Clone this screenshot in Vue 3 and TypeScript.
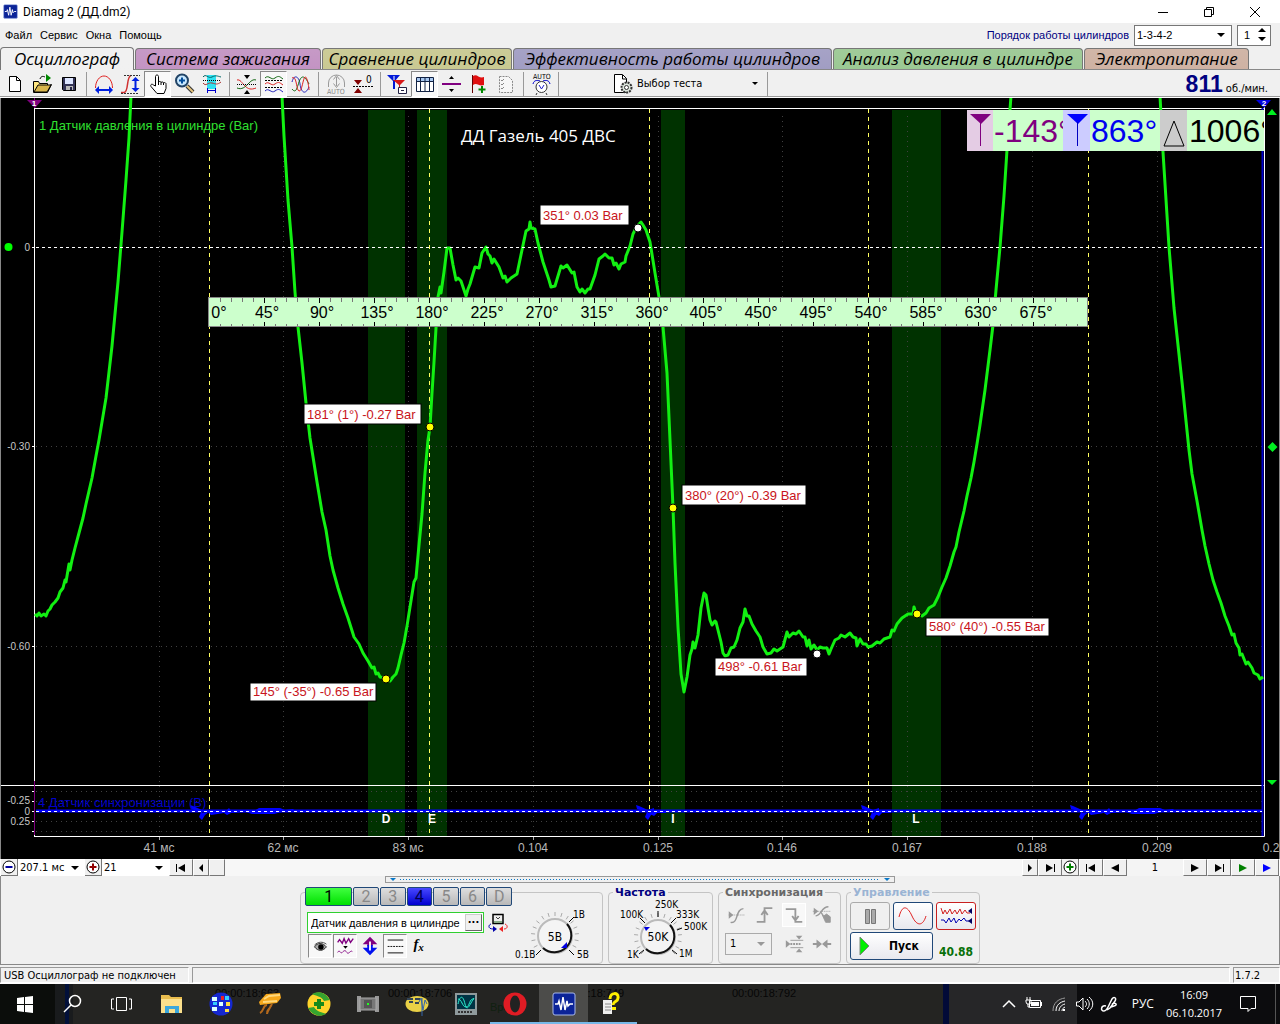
<script setup lang="ts">
import { ref } from 'vue'

interface Tool { label: string; icon: string; pressed?: boolean }
interface Tip { text: string; x: number; y: number; w: number; h: number; px: number; py: number; fill: string }

const order = ref('1-3-4-2')
const cylinder = ref('1')
const timeScale = ref('207.1 мс')
const zoomScale = ref('21')
const syncChannel = ref('1')
const channelName = ref('Датчик давления в цилиндре')

const menu = ['Файл', 'Сервис', 'Окна', 'Помощь']

const tabs = [
  { text: 'Осциллограф', color: '#f0f0f0', width: 134, active: true },
  { text: 'Система зажигания', color: '#c08ec0', width: 186 },
  { text: 'Сравнение цилиндров', color: '#c6c68c', width: 190 },
  { text: 'Эффективность работы цилиндров', color: '#9c98c0', width: 319 },
  { text: 'Анализ давления в цилиндре', color: '#96c68e', width: 250 },
  { text: 'Электропитание', color: '#ccae9e', width: 165 }
]

const toolGroups: Tool[][] = [
  [
    { label: 'Новый', icon: '<path d="M6.500 4.500h7l4 4v11h-11z" fill="#fff" stroke="#000"/><path d="M13.500 4.500v4h4" fill="none" stroke="#000"/>' },
    { label: 'Открыть', icon: '<path d="M3.500 9.500h5l1 2h8v3l4-2-4 8h-14z" fill="#ffe680" stroke="#000"/><path d="M4 20l4-7h13l-4 7z" fill="#d8b64c" stroke="#000"/><path d="M16 2v8l5-4z" fill="#080"/><path d="M10 7c1-3 3-3 5-2" fill="none" stroke="#000"/>' },
    { label: 'Сохранить', icon: '<path d="M5.500 5.500h13v13h-12l-1-1z" fill="#335" stroke="#000"/><path d="M8 6h8v6H8z" fill="#dde6ff"/><path d="M9 14h7v4H9z" fill="#bbb"/><path d="M13 15h2v3h-2z" fill="#224"/>' }
  ],
  [
    { label: 'Масштаб цикла', icon: '<path d="M3.500 16c0-7 4-12 8.500-12s8.500 5 8.500 12" fill="none" stroke="#e02020"/><path d="M3 18l4-4v3h10v-3l4 4-4 4v-3H7v3z" fill="#0020e0"/>' },
    { label: 'Амплитуда', icon: '<path d="M2 20.500h3c5 0 2-16 7-17" fill="none" stroke="#d03030" stroke-width="1.500"/><path d="M5 3.500h16M2 21.500h18" stroke="#333" stroke-dasharray="2 1"/><path d="M16.500 5l4 4h-3v7h3l-4 4-4-4h3V9h-3z" fill="#0020e0"/>' },
    { label: 'Рука', pressed: true, icon: '<path d="M9.500 14V4.500c0-2 3-2 3 0V10c1-1 2.500-.5 2.500.5 1-1 2.500-.5 2.500.5 1-1 3 0 2.500 1.500v4l-2 5h-7l-6-7c-1-2 1-3 2.500-1.500z" fill="#fff" stroke="#000"/><path d="M12.500 10v3M15 10.500V13M17.500 11v2" stroke="#000"/>' },
    { label: 'Лупа', icon: '<path d="M14 14l6 6" stroke="#333" stroke-width="4"/><path d="M14 14l6 6" stroke="#e5c37c" stroke-width="2"/><circle cx="9" cy="8.500" r="6" fill="#c8e8ff" stroke="#246" stroke-width="2"/><path d="M9 5.500v6M6 8.500h6" stroke="#024c9a" stroke-width="2"/>' },
    { label: 'Фрагмент', icon: '<path d="M7 3h9v14H7z" fill="#30e0f0"/><path d="M3 5c3-4 5 2 9 0s5-1 9 0" fill="none" stroke="#066"/><path d="M3 8.500h18" stroke="#000" stroke-dasharray="1 1"/><path d="M3 11c3 4 5-1 9 0s5 2 9-1" fill="none" stroke="#a33"/><path d="M7.500 16v5M15.500 16v5M8 18.500h8" stroke="#00c"/>' }
  ],
  [
    { label: 'Сжать', icon: '<path d="M2 8c3-1 5 3 8 6s6 4 11 2" fill="none" stroke="#d22"/><path d="M2 16c5 2 8-1 11-4s5-5 8-4" fill="none" stroke="#161"/><path d="M2 12.500h19" stroke="#000" stroke-dasharray="1 1"/><path d="M9 3h6l-3 4zM9 22h6l-3-4z" fill="#000"/>' },
    { label: 'Раздельно', pressed: true, icon: '<path d="M3 6c4-4 6 3 10 0s5-1 8 1" fill="none" stroke="#161"/><path d="M3 12c4-4 6 3 10 0s5-1 8 1" fill="none" stroke="#d22"/><path d="M3 19c4-4 6 3 10 0s5-1 8 1" fill="none" stroke="#22b"/><path d="M3 8.500h18M3 15.500h18" stroke="#000" stroke-dasharray="2 1"/>' },
    { label: 'Наложение', icon: '<path d="M3 10c2-8 7-6 8 2s5 12 9 3" fill="none" stroke="#22b"/><path d="M3 17c4 5 5-1 7-7s5-8 10 2" fill="none" stroke="#161"/><path d="M3 6c5-3 4 12 7 13s4-13 6-14 4 10 4 13" fill="none" stroke="#d22"/>' }
  ],
  [
    { label: 'Авто', icon: '<path d="M4.500 15V11a8 8 0 0116 0v4M12.500 5v9M9.500 7.500l3-4 3 4M9.500 11.500l3 4 3-4" fill="none" stroke="#999"/><text x="3" y="22" font-size="7" fill="#888">AUTO</text>' },
    { label: 'Ноль', icon: '<path d="M3 8h8l-4 5zM3 21h8l-4-5z" fill="#800000"/><path d="M2 14.500h20" stroke="#000" stroke-dasharray="2 1"/><text x="15" y="11" font-size="10" fill="#000">0</text>' }
  ],
  [
    { label: 'Маркеры', icon: '<path d="M1 3h13L9 9v8H7V9z" fill="#0018d8"/><path d="M7 8h12l-5 5v6h-1v-6z" fill="#d81818"/><path d="M12.500 15.500h8v6h-8z" fill="#fff" stroke="#224"/><path d="M15 18.500h3" stroke="#224"/><path d="M8 4v4" stroke="#fff"/>' },
    { label: 'Таблица', pressed: true, icon: '<path d="M3.500 5.500h17v14h-17z" fill="#fff" stroke="#124"/><path d="M4 6h16v3H4z" fill="#a8c8f0"/><path d="M3 9.500h18M7.500 6v13M12 6v13M16.500 6v13" stroke="#124"/>' },
    { label: 'Линия', icon: '<path d="M2 12h19" stroke="#800080" stroke-width="2"/><path d="M9 7h5l-2.500-3zM9 17h5l-2.500 3z" fill="#000"/>' },
    { label: 'Флажок', icon: '<path d="M5.500 3v18" stroke="#600"/><path d="M6 4c4-3 6 3 11 1v8c-5 2-7-3-11 0z" fill="#e01010"/><path d="M15 14v7M11.500 17.500h7" stroke="#080" stroke-width="2"/>' },
    { label: 'Список', icon: '<path d="M5.500 4.500h9l4 4v12h-13z" fill="#f6f6f6" stroke="#888" stroke-dasharray="2 1"/><path d="M7 8l1 1 2-2M7 12l1 1 2-2M7 16l1 1 2-2" fill="none" stroke="#888"/>' }
  ],
  [
    { label: 'Автоизмерение', icon: '<text x="4" y="7" font-size="7" fill="#000">AUTO</text><circle cx="12.500" cy="15" r="5.500" fill="#fff" stroke="#333"/><path d="M10 13l2.500 4 2.500-4" fill="none" stroke="#22c"/><path d="M4 12c1-4 4-4 7-3M21 12c-1-4-4-4-7-3" fill="none" stroke="#00c"/><path d="M8 21l-1 2M17 21l1 2" stroke="#333"/>' }
  ]
]

const pathOf = (points: number[][]) => 'M' + points.map(p => p.join(' ')).join('L')

const pressure = [
  pathOf([[35, 614], [37, 616], [39, 613], [41, 616], [44, 614], [46, 616], [48, 611], [50, 609], [52, 605], [55, 602], [58, 598], [60, 592], [63, 588], [65, 580], [66, 582], [69, 564], [70, 570], [72, 560], [75, 548], [79, 533], [83, 518], [86, 504], [92, 478], [96, 456], [99, 440], [106, 398], [112, 346], [118, 282], [122, 232], [126, 180], [129, 138], [131, 96]]),
  pathOf([[282, 96], [284, 136], [288, 200], [292, 247], [295, 292], [298, 327], [302, 363], [306, 403], [310, 438], [317, 482], [322, 512], [326, 530], [330, 556], [333, 570], [338, 588], [343, 604], [348, 618], [354, 637], [359, 644], [363, 653], [368, 661], [372, 668], [374, 667], [376, 674], [378, 673], [380, 677], [385, 678], [390, 681], [393, 677], [396, 674], [398, 668], [401, 655], [404, 643], [407, 626], [410, 607], [414, 582], [416, 578], [419, 545], [422, 514], [425, 473], [428, 440], [430, 427], [432, 393], [434, 362], [436, 328], [438, 297], [440, 287], [441, 293], [444, 272], [447, 248], [450, 248], [453, 265], [456, 280], [458, 278], [461, 281], [464, 290], [466, 296], [468, 289], [470, 284], [475, 267], [479, 268], [482, 253], [486, 247], [488, 254], [490, 256], [492, 263], [494, 259], [499, 267], [503, 278], [505, 276], [507, 282], [511, 278], [517, 274], [522, 250], [526, 231], [529, 229], [530, 222], [531, 228], [535, 229], [538, 243], [543, 262], [549, 280], [551, 287], [555, 286], [558, 276], [561, 266], [563, 268], [567, 265], [572, 273], [574, 272], [577, 287], [580, 292], [582, 289], [585, 293], [588, 289], [590, 289], [595, 275], [599, 259], [603, 256], [605, 254], [609, 258], [612, 258], [614, 265], [616, 263], [619, 269], [621, 264], [625, 262], [626, 256], [630, 246], [633, 234], [637, 226], [641, 222], [643, 225], [646, 230], [650, 242], [655, 273], [659, 297], [663, 327], [667, 373], [670, 440], [673, 508], [675, 563], [678, 627], [681, 674], [684, 692], [687, 677], [690, 655], [692, 649], [693, 642], [695, 648], [698, 635], [701, 608], [704, 593], [706, 595], [708, 608], [710, 620], [712, 625], [715, 621], [716, 622], [718, 630], [721, 642], [723, 653], [725, 656], [728, 655], [731, 648], [734, 647], [737, 640], [740, 628], [743, 622], [745, 609], [747, 616], [749, 616], [752, 624], [756, 631], [760, 637], [763, 647], [767, 654], [771, 653], [774, 649], [777, 651], [783, 647], [787, 632], [789, 637], [793, 633], [796, 634], [799, 631], [803, 637], [805, 637], [807, 646], [809, 640], [811, 649], [814, 645], [817, 650], [820, 647], [823, 648], [827, 648], [829, 654], [831, 649], [835, 640], [839, 638], [841, 635], [845, 637], [850, 633], [853, 637], [856, 638], [857, 646], [860, 639], [863, 644], [866, 644], [868, 647], [872, 646], [877, 642], [880, 643], [884, 639], [890, 637], [892, 630], [894, 631], [897, 624], [902, 618], [908, 614], [913, 614], [914, 607], [916, 613], [922, 616], [926, 613], [929, 608], [934, 605], [938, 597], [942, 587], [946, 578], [950, 566], [954, 552], [956, 547], [959, 532], [964, 511], [967, 496], [971, 478], [974, 462], [977, 444], [980, 425], [985, 390], [990, 350], [993, 325], [996, 290], [1000, 247], [1004, 196], [1007, 150], [1011, 96]]),
  pathOf([[1160, 96], [1163, 152], [1169, 247], [1174, 308], [1182, 382], [1189, 450], [1192, 474], [1197, 501], [1202, 530], [1205, 546], [1209, 564], [1213, 580], [1217, 592], [1221, 603], [1225, 616], [1229, 626], [1232, 635], [1234, 634], [1236, 643], [1239, 648], [1240, 655], [1242, 654], [1246, 664], [1248, 662], [1252, 668], [1254, 673], [1258, 675], [1260, 679], [1263, 677]])
]

const syncBursts = [
  { x: 190, wide: true }, { x: 636, wide: false }, { x: 861, wide: false }, { x: 1070, wide: true }
]

const bands = [
  { x: 368, w: 37, text: 'D', tx: 386 }, { x: 417, w: 30, text: 'E', tx: 432 },
  { x: 661, w: 24, text: 'I', tx: 673 }, { x: 892, w: 49, text: 'L', tx: 916 }
]
const times = [
  { x: 159, text: '41 мс' }, { x: 283, text: '62 мс' }, { x: 408, text: '83 мс' }, { x: 533, text: '0.104' }, { x: 658, text: '0.125' },
  { x: 782, text: '0.146' }, { x: 907, text: '0.167' }, { x: 1032, text: '0.188' }, { x: 1157, text: '0.209' }
]
const strokes = [209, 429, 649, 868, 1088]
const ticks = Array.from({ length: 79 }, (_, i) => ({ x: Math.round(209 + (i + 1) * 879 / 80), major: (i + 1) % 5 === 0 }))
const degrees = Array.from({ length: 16 }, (_, i) => ({ x: i ? Math.round(212 + i * 879 / 16) : 219, text: `${i * 45}°` }))

const tips: Tip[] = [
  { text: '351° 0.03 Bar', x: 540, y: 205, w: 89, h: 20, px: 638, py: 228, fill: '#fff' },
  { text: '181° (1°) -0.27 Bar', x: 304, y: 404, w: 117, h: 20, px: 430, py: 427, fill: '#ff0' },
  { text: '380° (20°) -0.39 Bar', x: 682, y: 485, w: 124, h: 20, px: 673, py: 508, fill: '#ff0' },
  { text: '498° -0.61 Bar', x: 715, y: 658, w: 92, h: 18, px: 817, py: 654, fill: '#fff' },
  { text: '580° (40°) -0.55 Bar', x: 926, y: 618, w: 123, h: 18, px: 917, py: 614, fill: '#ff0' },
  { text: '145° (-35°) -0.65 Bar', x: 250, y: 683, w: 126, h: 18, px: 386, py: 679, fill: '#ff0' }
]

const channels = [
  { text: '1', kind: 'green' }, { text: '2', kind: '' }, { text: '3', kind: '' }, { text: '4', kind: 'blue' },
  { text: '5', kind: '' }, { text: '6', kind: '' }, { text: 'D', kind: '' }
]
const channelTools: Tool[] = [
  { label: 'Видимость', pressed: true, icon: '<path d="M6 13c3-5 9-5 13 0-4 5-9 5-13 0z" fill="#aaa" stroke="#222"/><circle cx="13" cy="13" r="3"/><path d="M6 11c4-4 9-4 13-1" fill="none" stroke="#444"/>' },
  { label: 'Фильтр', pressed: true, icon: '<path d="M4 8l2-3 3 4 2-5 2 5 3-5 2 4 3-4" fill="none" stroke="#800080" stroke-width="1.500"/><path d="M4 19c2-4 3 2 5 0s3-3 5 0 4-3 6-1" fill="none" stroke="#800080"/><path d="M10 12h5l-2.500 3z"/>' },
  { label: 'Инверсия', icon: '<path d="M12 2l8 8h-5v2H9v-2H4z" fill="#800080"/><path d="M12 22l8-8h-5v-3H9v3H4z" fill="#0010f0"/><path d="M12 7v10" stroke="#fff" stroke-width="2"/>' },
  { label: 'Уровни', pressed: true, icon: '<path d="M4 5.500h17M4 19.500h17" stroke="#000"/><path d="M4 12.500h17" stroke="#000" stroke-dasharray="2 1"/>' },
  { label: 'Функция', icon: '<text x="5" y="15" font-family="Liberation Serif, serif" font-size="16" font-style="italic" font-weight="bold">f</text><text x="10" y="17" font-family="Liberation Serif, serif" font-size="12" font-style="italic" font-weight="bold">x</text>' }
]
const syncTools: Tool[] = [
  { label: 'Любой фронт', icon: '<path d="M3 12h18" stroke="#999" stroke-dasharray="1 1"/><path d="M3 8v8l5-4z" fill="#999"/><path d="M5 20c9 2 5-15 14-15" fill="none" stroke="#999" stroke-width="1.500"/>' },
  { label: 'Передний фронт', icon: '<path d="M3 19.500h8.500v-15H20M8 12l3.500-5 3.500 5" fill="none" stroke="#999" stroke-width="2"/>' },
  { label: 'Задний фронт', pressed: true, icon: '<path d="M3 5.500h10.500v14H21M10 13l3.500 5 3.500-5" fill="none" stroke="#999" stroke-width="2"/>' },
  { label: 'Ручной уровень', icon: '<path d="M2 8h20" stroke="#999" stroke-dasharray="1 1"/><path d="M3 4v8l5-4z" fill="#999"/><path d="M5 13c6 0 6-10 14-10" fill="none" stroke="#999" stroke-width="1.500"/><path d="M11 9l3 4 3-2 4 3v6h-5z" fill="#999" stroke="#999"/>' }
]
const syncTools2: Tool[] = [
  { label: 'Уровень', icon: '<path d="M2 8v8l5-4z" fill="#999"/><path d="M7 12h12" stroke="#999" stroke-dasharray="2 1" stroke-width="2"/><path d="M7 8h14M7 16h14" stroke="#999"/><path d="M13 3h7l-3.500 4zM13 21h7l-3.500-4z" fill="#999"/>' },
  { label: 'Сдвиг', icon: '<path d="M2 12h8M14 12h8" stroke="#999" stroke-width="2"/><path d="M6 7v10l6-5zM18 7v10l-6-5z" fill="#999"/>' }
]

const ghostTimes = [
  { x: 215, text: '00:00:18:663' }, { x: 388, text: '00:00:18:706' }, { x: 560, text: '00:00:18:749' }, { x: 732, text: '00:00:18:792' }
]
const wave = '<rect x="1" y="1" width="22" height="22" rx="2" fill="#0c2498" stroke="#a8b8e8"/><path d="M3 12h3l1-3 2 9 2-13 2 13 2-9 1 5 2-2h3" fill="none" stroke="#fff" stroke-width="1.500"/>'
const tasks: { label: string; icon: string; open?: boolean; active?: boolean }[] = [
  { label: 'Пуск', icon: '<path d="M4 6l7-1v7H4zM12 5l8-1v8h-8zM4 13h7v7l-7-1zM12 13h8v8l-8-1z" fill="#fff"/>' },
  { label: 'Поиск', icon: '<circle cx="13" cy="9" r="5.500" fill="none" stroke="#fff" stroke-width="1.500"/><path d="M9 13l-7 7" stroke="#fff" stroke-width="1.500"/>' },
  { label: 'Представление задач', icon: '<path d="M5.500 5.500h10v13h-10zM3 7H.5v10H3M18 7h2.500v10H18" fill="none" stroke="#fff"/>' },
  { label: 'Проводник', icon: '<path d="M1 3h8l2 2h11v16H1z" fill="#e9bd4e"/><path d="M1 7h21v14H1z" fill="#fbe08c"/><path d="M5 21v-7h14v7h-4v-4H9v4z" fill="#3ba7dc"/>' },
  { label: 'Диагностика', icon: '<circle cx="12" cy="12" r="11.500" fill="#1528d0"/><path d="M3 5h5v4H3zM10 10h4v4h-4zM3 15h5v4H3z" fill="#dff"/><path d="M12 4h3v4h-3z" fill="#e22"/><path d="M17 10h4v4h-4zM16 17h4v3h-4z" fill="#fd4"/><path d="M4 10h4v3H4zM16 4h4v4h-4z" fill="#3cf"/>' },
  { label: 'Сканер', icon: '<path d="M1 10L8 2l14-1 1 5-4 5-17 2z" fill="#f6a81c"/><path d="M6 7l5-3 11-1M5 10l14-1" fill="none" stroke="#ffd87c" stroke-width="2"/><path d="M9 13c-4 0-3 6-7 8M14 12c-2 5-4 5-5 8M13 13c-1 4-4 6-4 9" fill="none" stroke="#b4691c" stroke-width="2"/>' },
  { label: '360', icon: '<circle cx="12" cy="12" r="11.500" fill="#ffd42a"/><path d="M5 2A12 12 0 0120 4l3 4-6 1C14 4 9 4 5 2zM19 22A12 12 0 014 20l-3-4 6-1c3 5 8 5 12 7z" fill="#35a42f"/><path d="M12 7v10M7 12h10" stroke="#168a1c" stroke-width="4"/>' },
  { label: 'Схема', icon: '<path d="M1 4h4v16H1zM19 4h4v16h-4z" fill="#999"/><path d="M4 6h16v12H4z" fill="#777" stroke="#aaa"/><path d="M8 8h8v8H8z" fill="#555"/><path d="M11 11h2v2h-2z" fill="#2f2"/>' },
  { label: 'Диск', icon: '<ellipse cx="12" cy="12" rx="11.500" ry="8" fill="#e9d046"/><path d="M2 7h6M10 7h5M4 10h4M10 11h4" stroke="#345" stroke-width="2"/><path d="M14 10l2-4 2 12 2-10 2 4M17 6v18" fill="none" stroke="#3564a8"/>' },
  { label: 'Мотортестер', icon: '<path d="M1 1h22v22H1z" fill="#8f9a9c"/><path d="M3 3h18v14H3z" fill="#034"/><path d="M4 12c2-9 5-9 7 0s5 0 9-6M4 7c4 0 4 8 8 8s3-9 8-8" fill="none" stroke="#2df0d0"/><path d="M4 20h15" stroke="#333" stroke-dasharray="2 1" stroke-width="2"/>' },
  { label: 'Opera', open: true, icon: '<circle cx="12" cy="12" r="11.500" fill="#e01c24"/><ellipse cx="12" cy="12" rx="5" ry="8.500" fill="#222"/>' },
  { label: 'Diamag 2', open: true, active: true, icon: wave },
  { label: 'Справка', open: true, icon: '<path d="M2 8h9v14H2z" fill="#eee"/><path d="M4 12h6M4 15h6M4 18h6" stroke="#888"/><path d="M9 7c0-7 9-7 8-1 0 4-5 3-5 7" fill="none" stroke="#fff000" stroke-width="3"/><path d="M11 15h4v3h-4z" fill="#fff000"/>' }
]
const tray: Tool[] = [
  { label: 'Скрытые значки', icon: '<path d="M6 15l6-6 6 6" fill="none" stroke="#fff" stroke-width="1.500"/>' },
  { label: 'Батарея', icon: '<path d="M7.500 8.500h11v7h-11z" fill="none" stroke="#fff"/><path d="M9 10h8v4H9zM19 10h1v4h-1z" fill="#fff"/><path d="M5 5v3M8 5v3M4 8h5v2l-1 2H5l-1-2zM6 12v3h1" fill="none" stroke="#fff"/>' },
  { label: 'Сеть', icon: '<g fill="none" stroke="#fff"><path d="M6 19C6 11 11 7 18 6" stroke="#999"/><path d="M9 19c0-6 4-9 9-10M12 19c0-3 2-6 6-7M15 19c0-2 1-3 3-4"/></g><path d="M16 17h2v2h-2z" fill="#fff"/>' },
  { label: 'Громкость', icon: '<path d="M4.500 10v4H7l4 4V6l-4 4z" fill="none" stroke="#fff"/><path d="M13 9c2 2 2 4 0 6M15 7c3 3 3 7 0 10M17 5c5 4 5 10 0 14" fill="none" stroke="#fff"/>' },
  { label: 'Рукописный ввод', icon: '<path d="M9 14c-5-1-6 5-2 5 3 0 4-4 6-8l2-4c2-3 5-1 3 2l-5 7-3 2M15 12c4-2 6 1 2 2l-3 1" fill="none" stroke="#fff" stroke-width="1.500"/>' }
]

const knobTicks = (cx: number, cy: number) =>
  Array.from({ length: 17 }, (_, i) => {
    const a = (225 - i * 270 / 16) * Math.PI / 180
    const at = (r: number) => `${Math.round((cx + Math.cos(a) * r) * 10) / 10} ${Math.round((cy - Math.sin(a) * r) * 10) / 10}`
    return `M${at(20)}L${at(24)}`
  }).join('')
</script>

<template>
  <main class="window">
    <header class="titlebar">
      <svg class="app-icon" viewBox="0 0 24 24" v-html="wave"></svg>
      <h1>Diamag 2 (ДД.dm2)</h1>
      <button aria-label="Свернуть"><svg viewBox="0 0 12 12"><path d="M1 6.500h10" /></svg></button>
      <button aria-label="Развернуть"><svg viewBox="0 0 12 12"><path d="M1.500 3.500h7v7h-7zM3.500 3V1.500h7v7H9" /></svg></button>
      <button aria-label="Закрыть"><svg viewBox="0 0 12 12"><path d="M1 1l10 10M11 1L1 11" /></svg></button>
    </header>

    <div class="menubar">
      <nav><a v-for="m in menu" :key="m" href="#">{{ m }}</a></nav>
      <label class="order-label" for="order">Порядок работы цилиндров</label>
      <div class="combo order">
        <select id="order" v-model="order"><option>1-3-4-2</option></select>
        <svg viewBox="0 0 8 8"><path d="M0 2h8L4 6z" /></svg>
      </div>
      <div class="spin">
        <input v-model="cylinder" aria-label="Номер цилиндра">
        <svg viewBox="0 0 8 16"><path d="M0 5h8L4 1zM0 10h8l-4 4z" /></svg>
      </div>
    </div>

    <div class="tabs" role="tablist">
      <button v-for="t in tabs" :key="t.text" role="tab" :class="{ active: t.active }" :style="{ flexBasis: t.width + 'px', backgroundColor: t.color }">{{ t.text }}</button>
    </div>

    <div class="toolbar">
      <template v-for="(g, gi) in toolGroups" :key="gi">
        <button v-for="t in g" :key="t.label" class="tool" :class="{ pressed: t.pressed }" :aria-label="t.label"><svg viewBox="0 0 24 24" v-html="t.icon"></svg></button>
        <i class="sep"></i>
      </template>
      <button class="test">
        <svg viewBox="0 0 20 20"><path d="M1.500 .5h8l4 4v14h-12z" fill="#fff" stroke="#000" /><path d="M9.500 1v4h4" fill="none" stroke="#000" /><circle cx="13.500" cy="13.500" r="5" fill="#dfe8df" stroke="#333" stroke-width="2" stroke-dasharray="2 1" /><circle cx="13.500" cy="13.500" r="2" fill="#fff" stroke="#333" /></svg>
        <span>Выбор теста</span>
        <svg class="arrow" viewBox="0 0 6 6"><path d="M0 1h6L3 4z" /></svg>
      </button>
      <i class="sep"></i>
      <p class="rpm"><b>811</b> об./мин.</p>
    </div>

    <svg class="chart" viewBox="0 98 1280 761">
      <rect y="98" width="1280" height="761" />
      <rect v-for="b in bands" :key="b.text" class="band" :x="b.x" y="110" :width="b.w" height="726" />
      <g class="grid">
        <path v-for="t in times" :key="t.x" :d="`M${t.x}.5 116V835`" />
        <path d="M36 446.500H1262M36 646.500H1262M36 791.500H1262M36 801.500H1262M36 821.500H1262M36 831.500H1262" />
      </g>
      <path class="yellow" v-for="s in strokes" :key="s" :d="`M${s}.5 109V836`" />
      <path class="axis" d="M34.500 98V836M34 108.500H1264M1 785.500H1264M34 836.500H1264.500V100M32 247.500h3M32 446.500h3M32 646.500h3M32 791.500h3M32 801.500h3M32 811.500h3M32 821.500h3M32 831.500h3" />
      <path d="M34.500 781V835M34.500 98v10" stroke="#800080" />
      <path d="M1262.500 108V836" stroke="#0000c8" stroke-width="2" />
      <path class="trace" v-for="(p, i) in pressure" :key="i" :d="p" />
      <path class="zero" d="M36 247.500H1262" />

      <path d="M36 811H1262" stroke="#0000ff" stroke-width="3" />
      <g v-for="b in syncBursts" :key="b.x" :transform="`translate(${b.x} 811)`" class="burst">
        <path d="M0-6l3 1 9 4v3l7-1-4 3-3 5-3-3 2-5-10-3z" />
        <path v-if="b.wide" d="M18 1l7-1 12-1 2-2 2 3 10-1 3 1v-1l10 1 5-3h21l5 2 8-1 2 2 10-1v2H92l-8 2H62l-6-2-15 1-4 2-3-2-13 2z" />
        <path v-else d="M12-1l6-2v3h8l4-1v3h-9l-3 3-4-2z" />
      </g>
      <path class="zero" d="M36 811.500H1262" />
      <text class="marker" v-for="b in bands" :key="b.text" :x="b.tx" y="823">{{ b.text }}</text>

      <g class="scale" text-anchor="end">
        <text x="30" y="251">0</text><text x="30" y="450">-0.30</text><text x="30" y="650">-0.60</text>
        <text x="30" y="804">-0.25</text><text x="30" y="815">0</text><text x="30" y="825">0.25</text>
      </g>
      <g class="times">
        <template v-for="t in times" :key="t.x"><text :x="t.x" y="852">{{ t.text }}</text><path :d="`M${t.x}.5 837v3`" /></template>
        <text x="1271" y="852">0.2</text>
      </g>
      <text class="name" x="39" y="130" fill="#30e030">1 Датчик давления в цилиндре (Bar)</text>
      <text class="name" x="38" y="807" fill="#0000c8">4 Датчик синхронизации (В)</text>
      <text class="note" x="461" y="142">ДД Газель 405 ДВС</text>

      <rect x="208.500" y="297.500" width="879" height="29" fill="#ccffcc" stroke="#888" />
      <path v-for="t in ticks" :key="t.x" :d="t.major ? `M${t.x}.5 298v5M${t.x}.5 326v-4` : `M${t.x}.5 298v4M${t.x}.5 326v-2`" :stroke="t.major ? '#000' : '#777'" />
      <text class="degree" v-for="d in degrees" :key="d.text" :x="d.x" y="318">{{ d.text }}</text>

      <g v-for="t in tips" :key="t.text">
        <circle :cx="t.px" :cy="t.py" r="4" :fill="t.fill" stroke="#000" />
        <rect :x="t.x" :y="t.y" :width="t.w" :height="t.h" fill="#fff" stroke="#000" />
        <text class="tip" :x="t.x + 3" :y="t.y + t.h - 5">{{ t.text }}</text>
      </g>

      <g class="readout">
        <rect x="967" y="110" width="26" height="41" fill="#e4cce4" /><rect x="993" y="110" width="70" height="41" fill="#ccffcc" />
        <path d="M970 114h21l-10 10z" fill="#800080" /><path d="M980.500 122v24" stroke="#800080" /><text x="994" y="142" fill="#800080">-143°</text>
        <rect x="1063" y="110" width="27" height="41" fill="#ccccff" /><rect x="1090" y="110" width="70" height="41" fill="#ccffcc" />
        <path d="M1067 114h21l-10 10z" fill="#0000ff" /><path d="M1077.500 122v24" stroke="#0000c0" /><text x="1091" y="142" fill="#0000f0">863°</text>
        <rect x="1160" y="110" width="27" height="41" fill="#cccccc" /><rect x="1187" y="110" width="77" height="41" fill="#ccffcc" />
        <path d="M1174 121l10 25h-20z" fill="none" stroke="#000" /><text x="1189" y="142" fill="#000">1006°</text>
        <rect x="1264" y="110" width="16" height="41" fill="#000" />
        <path d="M1264.500 110v41" stroke="#fff" />
      </g>
      <path d="M27 100h15l-7 8z" fill="#800080" /><text class="flag" x="34" y="106">1</text>
      <path d="M1256 100h15l-7 8z" fill="#0000e0" /><text class="flag" x="1264" y="106">2</text>
      <circle cx="8.500" cy="247" r="4" fill="#00ff00" />
      <path d="M1267 115h10l-5-6zM1267 780h10l-5 5zM1272.500 442l5 5-5 5-5-5z" fill="#00f020" />
      <path d="M.5 98V859M1279.500 98V859" stroke="#888" />
    </svg>

    <div class="scroller">
      <button class="small round" aria-label="Уменьшить"><svg viewBox="0 0 14 14"><circle cx="7" cy="7" r="6" fill="#fff" stroke="#000" /><path d="M3.500 7h7" stroke="#0000a0" stroke-width="2" /></svg></button>
      <div class="combo flat span"><select v-model="timeScale" aria-label="Развёртка"><option>207.1 мс</option></select><svg viewBox="0 0 8 8"><path d="M0 2h8L4 6z" /></svg></div>
      <button class="small round" aria-label="Увеличить"><svg viewBox="0 0 14 14"><circle cx="7" cy="7" r="6" fill="#fff" stroke="#000" /><path d="M3.500 7h7M7 3.500v7" stroke="#900000" stroke-width="2" /></svg></button>
      <div class="combo flat span"><select v-model="zoomScale" aria-label="Масштаб"><option>21</option></select><svg viewBox="0 0 8 8"><path d="M0 2h8L4 6z" /></svg></div>
      <button class="large" aria-label="В начало"><svg viewBox="0 0 14 14"><path d="M2 3h1v8H2zM11 3v8L4 7z" /></svg></button>
      <button class="small" aria-label="Влево"><svg viewBox="0 0 14 14"><path d="M9 3v8L5 7z" /></svg></button>
      <button class="small" aria-label="Ползунок"></button>
      <div class="track"></div>
      <button class="small" aria-label="Вправо"><svg viewBox="0 0 14 14"><path d="M5 3v8l4-4z" /></svg></button>
      <button class="large" aria-label="В конец"><svg viewBox="0 0 14 14"><path d="M11 3h1v8h-1zM3 3v8l7-4z" /></svg></button>
      <button class="small round" aria-label="Добавить"><svg viewBox="0 0 14 14"><circle cx="7" cy="7" r="6" fill="#fff" stroke="#000" /><path d="M3.500 7h7M7 3.500v7" stroke="#008000" stroke-width="2" /></svg></button>
      <button class="large" aria-label="Первый"><svg viewBox="0 0 14 14"><path d="M2 3h1v8H2zM11 3v8L4 7z" /></svg></button>
      <button class="large" aria-label="Предыдущий"><svg viewBox="0 0 14 14"><path d="M11 3v8L3 7z" /></svg></button>
      <output>1</output>
      <button class="large" aria-label="Следующий"><svg viewBox="0 0 14 14"><path d="M3 3v8l8-4z" /></svg></button>
      <button class="large" aria-label="Последний"><svg viewBox="0 0 14 14"><path d="M11 3h1v8h-1zM3 3v8l7-4z" /></svg></button>
      <button class="large" aria-label="Воспроизвести"><svg viewBox="0 0 14 14"><path d="M3 3v8l8-4z" fill="#008000" /></svg></button>
      <button class="large" aria-label="Воспроизвести цикл"><svg viewBox="0 0 14 14"><path d="M3 3v8l8-4z" fill="#0000ff" /></svg></button>
    </div>

    <section class="panel">
      <div class="splitter"><i></i><span></span><i></i></div>
      <div class="groups">
        <div class="group channel">
          <div class="channel-left">
            <div class="channels"><button v-for="c in channels" :key="c.text" :class="c.kind">{{ c.text }}</button></div>
            <div class="sensor">
              <div class="sensor-box"><input v-model="channelName" aria-label="Датчик"><button aria-label="Выбрать датчик">···</button></div>
              <button class="device" aria-label="Прибор"><svg viewBox="0 0 20 20"><path d="M5 1.500h10v9H5z" fill="#eee" stroke="#000" stroke-width="1.500" /><path d="M6 8h8v2H6z" fill="#8a8" /><path d="M8 4l2 2 2-2" fill="none" stroke="#444" /><path d="M3 11c-3 1-3 5 2 5" fill="none" stroke="#00a" /><path d="M5 13v6l4-3z" fill="#00a" /><path d="M17 11c3 1 3 5-1 5" fill="none" stroke="#e22" /><path d="M15 13v6l-4-3z" fill="#e22" /></svg></button>
            </div>
            <div class="icons"><button v-for="t in channelTools" :key="t.label" :class="{ pressed: t.pressed }" :aria-label="t.label"><svg viewBox="0 0 24 24" v-html="t.icon"></svg></button></div>
          </div>
          <svg class="dial volt" viewBox="511 893 90 69">
            <path :d="knobTicks(554, 936)" stroke="#aaa" />
            <path d="M568 922l5-5M568 950l5 5M540 950l-5 5" stroke="#000" />
            <circle cx="554" cy="936" r="17" fill="#f4f4f4" stroke="#bbb" stroke-width="2" />
            <path d="M566 924a17 17 0 01-24 24" fill="none" stroke="#111" stroke-width="2" />
            <path d="M566 942v6h-6z" fill="#0000e0" />
            <text class="val" x="554" y="941">5В</text>
            <text x="572" y="918">1В</text><text x="576" y="958">5В</text><text x="514" y="958">0.1В</text>
          </svg>
        </div>

        <div class="group rate">
          <h2>Частота</h2>
          <svg class="dial" viewBox="609 893 103 69">
            <path :d="knobTicks(658, 937)" stroke="#aaa" />
            <path d="M645 923l-5-5M658 917v-6M671 923l5-5M677 930l5-2M672 950l5 4M644 950l-5 4" stroke="#000" />
            <circle cx="658" cy="937" r="17" fill="#f4f4f4" stroke="#bbb" stroke-width="2" />
            <path d="M670 925a17 17 0 01-24 24" fill="none" stroke="#111" stroke-width="2" />
            <path d="M644 927h6l-4 4z" fill="#0000e0" />
            <text class="val" x="658" y="941">50K</text>
            <text x="620" y="918">100K</text><text x="655" y="908">250K</text><text x="676" y="918">333K</text><text x="684" y="930">500K</text><text x="627" y="958">1K</text><text x="679" y="957">1M</text>
          </svg>
        </div>

        <div class="group sync">
          <h2>Синхронизация</h2>
          <div class="row"><button v-for="t in syncTools" :key="t.label" :class="{ pressed: t.pressed }" :aria-label="t.label"><svg viewBox="0 0 24 24" v-html="t.icon"></svg></button></div>
          <div class="row">
            <div class="combo sync-select"><select v-model="syncChannel" aria-label="Канал синхронизации"><option>1</option></select><svg viewBox="0 0 8 8"><path d="M0 2h8L4 6z" /></svg></div>
            <button v-for="t in syncTools2" :key="t.label" :aria-label="t.label"><svg viewBox="0 0 24 24" v-html="t.icon"></svg></button>
          </div>
        </div>

        <div class="group control">
          <h2>Управление</h2>
          <button aria-label="Пауза" class="pause"><svg viewBox="0 0 34 22"><path d="M12.500 4.500h4v14h-4zM18.500 4.500h4v14h-4z" fill="#aaa" stroke="#777" /></svg></button>
          <button aria-label="Один сигнал"><svg viewBox="0 0 34 22"><path d="M3 12C6 0 11 0 16 11s11 10 14 0" fill="none" stroke="#e02020" /></svg></button>
          <button aria-label="Самописец" class="rec"><svg viewBox="0 0 34 22"><path d="M2 3l2 6 2-4 2 4 3-5 2 5 3-4 2 4 3-5 2 5 3-4 2 3h3" fill="none" stroke="#d02020" /><path d="M2 15h3l2 3 3-5 2 4 3-4 2 5 3-4 2 2 3-3 2 3h4" fill="none" stroke="#0000b0" /><path d="M33 3v6l-4-3zM33 13v6l-4-3z" fill="#000060" /></svg></button>
          <button class="start"><svg viewBox="0 0 12 20"><path d="M1 1v18l9-9z" fill="#00f000" stroke="#787" /></svg><span>Пуск</span></button>
          <output>40.88</output>
        </div>
      </div>
    </section>

    <footer class="status"><span class="first">USB Осциллограф не подключен</span><span class="middle"></span><span class="version">1.7.2</span></footer>

    <div class="taskbar">
      <span v-for="g in ghostTimes" :key="g.x" class="ghost" :style="{ left: g.x + 'px' }">{{ g.text }}</span>
      <span class="ghost low">Время</span>
      <button v-for="t in tasks" :key="t.label" class="task" :class="{ open: t.open, active: t.active }" :aria-label="t.label"><svg viewBox="0 0 24 24" v-html="t.icon"></svg></button>
      <div class="tray">
        <button v-for="t in tray" :key="t.label" :aria-label="t.label"><svg viewBox="0 0 24 24" v-html="t.icon"></svg></button>
        <span class="lang">РУС</span>
        <time>16:09<br>06.10.2017</time>
        <button class="notes" aria-label="Уведомления"><svg viewBox="0 0 24 24"><path d="M4.500 4.500h15v12H15L12 19.500V16.500H4.500z" fill="none" stroke="#fff" /></svg></button>
      </div>
    </div>
  </main>
</template>

<style>
body { margin: 0; background: #f0f0f0; }
</style>

<style scoped>
.window { font: 11px/14px "DejaVu Sans Condensed", "Noto Sans", sans-serif; color: #000; overflow: hidden; }
.window * { box-sizing: border-box; }
button, input, select { font: inherit; color: inherit; margin: 0; padding: 0; border: 0; background: none; border-radius: 0; min-width: 0; }
h1, h2, p { margin: 0; font: inherit; }
svg { display: block; flex: none; }

.titlebar { display: flex; align-items: center; height: 23px; background: #fff; padding: 0 2px 0 3px; }
.titlebar h1 { flex: 1; margin-left: 5px; font: 12px/16px Roboto, sans-serif; }
.titlebar .app-icon { width: 15px; height: 15px; }
.titlebar button { width: 46px; height: 20px; display: grid; place-items: center; }
.titlebar button svg { width: 12px; height: 12px; fill: none; stroke: #000; }

.menubar { display: flex; align-items: center; height: 24px; padding: 0 9px 0 5px; font: 11px/14px "Liberation Sans", sans-serif; }
.menubar nav { flex: 1; display: flex; gap: 8px; }
.menubar a { color: #000; text-decoration: none; }
.order-label { color: #000080; margin-right: 5px; }
.combo { position: relative; display: flex; background: #fff; border: 1px solid #777; height: 21px; }
.combo select { appearance: none; width: 100%; padding-left: 2px; }
.combo svg { position: absolute; right: 6px; top: 50%; width: 8px; height: 8px; margin-top: -4px; pointer-events: none; }
.combo.order { width: 98px; }
.combo.flat { border: 0; height: 17px; }
.combo.span { width: 67px; }
.spin { display: flex; align-items: center; width: 34px; height: 21px; margin-left: 5px; border: 1px solid #777; background: #fff; }
.spin input { width: 18px; padding-left: 6px; }
.spin svg { width: 8px; height: 16px; margin-left: 2px; }

.tabs { display: flex; align-items: flex-end; height: 23px; border-bottom: 1px solid #888; gap: 1px; }
.tabs button { flex: 0 1 auto; height: 21px; border: 1px solid #777; border-bottom: 0; border-radius: 4px 4px 0 0; font: italic 17px/20px "Open Sans", sans-serif; white-space: nowrap; overflow: hidden; background-image: linear-gradient(rgba(255, 255, 255, .1), rgba(255, 255, 255, .05)); }
.tabs .active { height: 23px; margin-bottom: -1px; }

.toolbar { display: flex; align-items: center; height: 28px; padding-left: 1px; border-bottom: 1px solid #fff; box-shadow: inset 0 -1px #999; }
.tool { width: 27px; height: 26px; display: grid; place-items: center; border: 1px solid transparent; flex: none; }
.tool svg { width: 24px; height: 24px; }
.pressed { background: #f8f8f8; border: 1px solid; border-color: #888 #fff #fff #888 !important; }
.sep { flex: none; width: 8px; height: 24px; background: linear-gradient(#999, #999) 4px 0 / 1px 100% no-repeat; }
.test { display: flex; align-items: center; width: 201px; height: 26px; padding-left: 51px; }
.test > svg { width: 20px; height: 20px; }
.test span { flex: 1; text-align: left; margin-left: 4px; }
.test .arrow { width: 6px; height: 6px; margin-right: 5px; }
.rpm { margin-left: auto; padding-right: 12px; }
.rpm b { font: bold 23px/24px "Liberation Sans", sans-serif; color: #000080; }

.chart { width: 100%; height: auto; font-family: "Liberation Sans", sans-serif; }
.band { fill: #003200; }
.grid path { stroke: #404040; stroke-dasharray: 1 4; fill: none; }
.yellow { stroke: #ffff60; stroke-dasharray: 4 4; fill: none; }
.axis { stroke: #fff; fill: none; }
.zero { stroke: #fff; stroke-dasharray: 3 3; fill: none; }
.trace { fill: none; stroke: #12f012; stroke-width: 3; stroke-linejoin: round; }
.burst path { fill: #0000ff; }
.marker { fill: #fff; font-size: 12px; font-weight: bold; text-anchor: middle; }
.scale text { fill: #c8c8c8; font-size: 10px; }
.times text { fill: #b8b8b8; font-size: 12px; text-anchor: middle; }
.times path { stroke: #aaa; }
.name { font-size: 13px; }
.note { fill: #fff; font: 17px "Open Sans", sans-serif; }
.degree { font-size: 16px; text-anchor: middle; }
.tip { fill: #c81420; font-size: 13px; }
.readout text { font-size: 32px; }
.flag { fill: #fff; font-size: 8px; font-weight: bold; text-anchor: middle; }

.scroller { display: flex; height: 17px; padding: 0 1px; background: #fff; }
.scroller button { display: grid; place-items: center; height: 17px; flex: none; background: #f0f0f0; border: 1px solid; border-color: #fff #777 #777 #fff; }
.scroller button svg { width: 14px; height: 14px; }
.scroller .small { width: 16px; }
.scroller .large { width: 24px; }
.scroller .round { width: 17px; border-top: 0; border-left: 0; }
.scroller .track { flex: 1; background: #f7f7f7; }
.scroller output { width: 56px; text-align: center; line-height: 17px; background: #f4f4f4; }

.panel { border: 1px solid #888; border-top: 0; height: 89px; }
.splitter { display: flex; align-items: center; justify-content: space-between; width: 510px; height: 7px; margin: 0 auto; padding: 0 4px; border: 1px solid #999; }
.splitter i { border: 3px solid transparent; border-top: 3px solid #0878c8; border-bottom: 0; }
.splitter span { flex: 1; height: 1px; margin: 0 4px; background: repeating-linear-gradient(90deg, #0878c8 0 1px, transparent 1px 3px); }
.groups { display: flex; justify-content: center; gap: 5px; padding-top: 9px; }
.group { position: relative; height: 72px; border: 1px solid #c4c4c4; border-radius: 4px; }
.group h2 { position: absolute; top: -7px; left: 4px; padding: 0 2px; background: #f0f0f0; font: bold 11px/14px "DejaVu Sans", sans-serif; color: #000080; }
.channel { display: flex; width: 303px; }
.channel-left { width: 211px; padding-left: 4px; margin-top: -6px; }
.channels { display: flex; gap: 1px; }
.channels button { width: 26px; height: 19px; border: 1px solid #204878; border-radius: 2px; background: linear-gradient(#dedede, #b8b8b8); color: #888; font: 16px/16px Roboto, sans-serif; }
.channels .green { width: 48px; background: linear-gradient(#40ff40, #00e000); color: #000; }
.channels .blue { background: linear-gradient(#4848ff, #0000d0); color: #000050; }
.sensor { display: flex; gap: 4px; padding-left: 2px; margin-top: 6px; }
.sensor-box { display: flex; width: 177px; height: 21px; border: 1px solid #30d030; background: #fff; padding: 1px; }
.sensor-box input { flex: 1; padding-left: 2px; font: 11px/14px "Liberation Sans", sans-serif; }
.sensor-box button { width: 17px; background: #f0f0f0; border: 1px solid; border-color: #ccc #666 #666 #ccc; line-height: 12px; font-weight: bold; }
.device svg { width: 20px; height: 20px; }
.icons { display: flex; gap: 1px; padding-left: 3px; margin-top: 1px; }
.icons button { width: 24px; height: 24px; border: 1px solid transparent; }
.icons svg { width: 22px; height: 22px; }
.dial { width: 90px; height: 69px; font-size: 10px; }
.dial .val { font-size: 12px; text-anchor: middle; }
.rate { width: 105px; }
.rate .dial { width: 103px; }
.sync { width: 123px; padding: 9px 6px; }
.sync h2 { color: #686868; }
.row { display: flex; align-items: center; justify-content: space-between; height: 26px; margin-bottom: 3px; }
.row button { width: 24px; height: 24px; border: 1px solid transparent; }
.row .pressed { border-color: #fff !important; }
.row button svg { width: 22px; height: 22px; }
.row .combo { width: 47px; height: 22px; background: #f0f0f0; border-color: #aaa; margin-right: 8px; }
.row .combo svg { fill: #999; }
.row .combo select { padding-left: 4px; }
.control { display: grid; grid-template-columns: repeat(3, 40px); gap: 2px 3px; width: 134px; padding: 9px 3px; align-content: start; }
.control h2 { color: #9ab4d4; }
.control button { height: 28px; border: 1px solid #204878; border-radius: 3px; background: linear-gradient(#fff, #e8e8ee); display: flex; align-items: center; justify-content: center; }
.control button svg { width: 34px; height: 22px; }
.control .pause { border-color: #aaa; background: #f0f0f0; }
.control .rec { border-color: #c82020; }
.control .start { grid-column: span 2; justify-content: flex-start; padding-left: 8px; }
.control .start svg { width: 12px; height: 20px; }
.control .start span { margin-left: 18px; font: bold 12px/14px "DejaVu Sans Condensed", sans-serif; }
.control output { align-self: center; text-align: center; margin-top: 12px; color: #087008; font: bold 12px/14px "DejaVu Sans Condensed", sans-serif; }

.status { display: flex; gap: 3px; height: 19px; padding-top: 2px; border-bottom: 1px solid #fff; }
.status span { border: 1px solid; border-color: #999 #fff #fff #999; padding-left: 3px; line-height: 15px; white-space: nowrap; }
.status .first { width: 189px; }
.status .middle { flex: 1; }
.status .version { width: 47px; padding-left: 1px; }

.taskbar { position: relative; display: flex; height: 40px; background: linear-gradient(90deg, #0b0d0b 0 55px, #191b1d 55px 65px, #02103a 65px 69px, #191b1d 69px 73px, #242422 73px 943px, #020a38 943px 949px, #262628 949px 1077px, #0c0c0e 1077px); }
.ghost { position: absolute; top: 2px; color: #060606; font: 11px/14px "Liberation Sans", sans-serif; }
.ghost.low { top: 16px; left: 490px; color: #102010; }
.task { position: relative; width: 49px; height: 40px; display: grid; place-items: center; }
.task svg { width: 24px; height: 24px; }
.task.open { box-shadow: inset 0 -2px #78b8e8; }
.task.active { background: #4c4c4a; }
.tray { display: flex; align-items: center; margin-left: auto; color: #fff; font: 12px/18px "Open Sans", sans-serif; }
.tray button { width: 25px; height: 40px; }
.tray svg { width: 24px; height: 24px; }
.tray .lang { margin: 0 12px 0 10px; }
.tray time { text-align: center; font: 11px/18px "Open Sans", sans-serif; }
.tray .notes { width: 54px; padding: 0 14px; border-right: 1px solid #555; margin-right: 4px; }
</style>
